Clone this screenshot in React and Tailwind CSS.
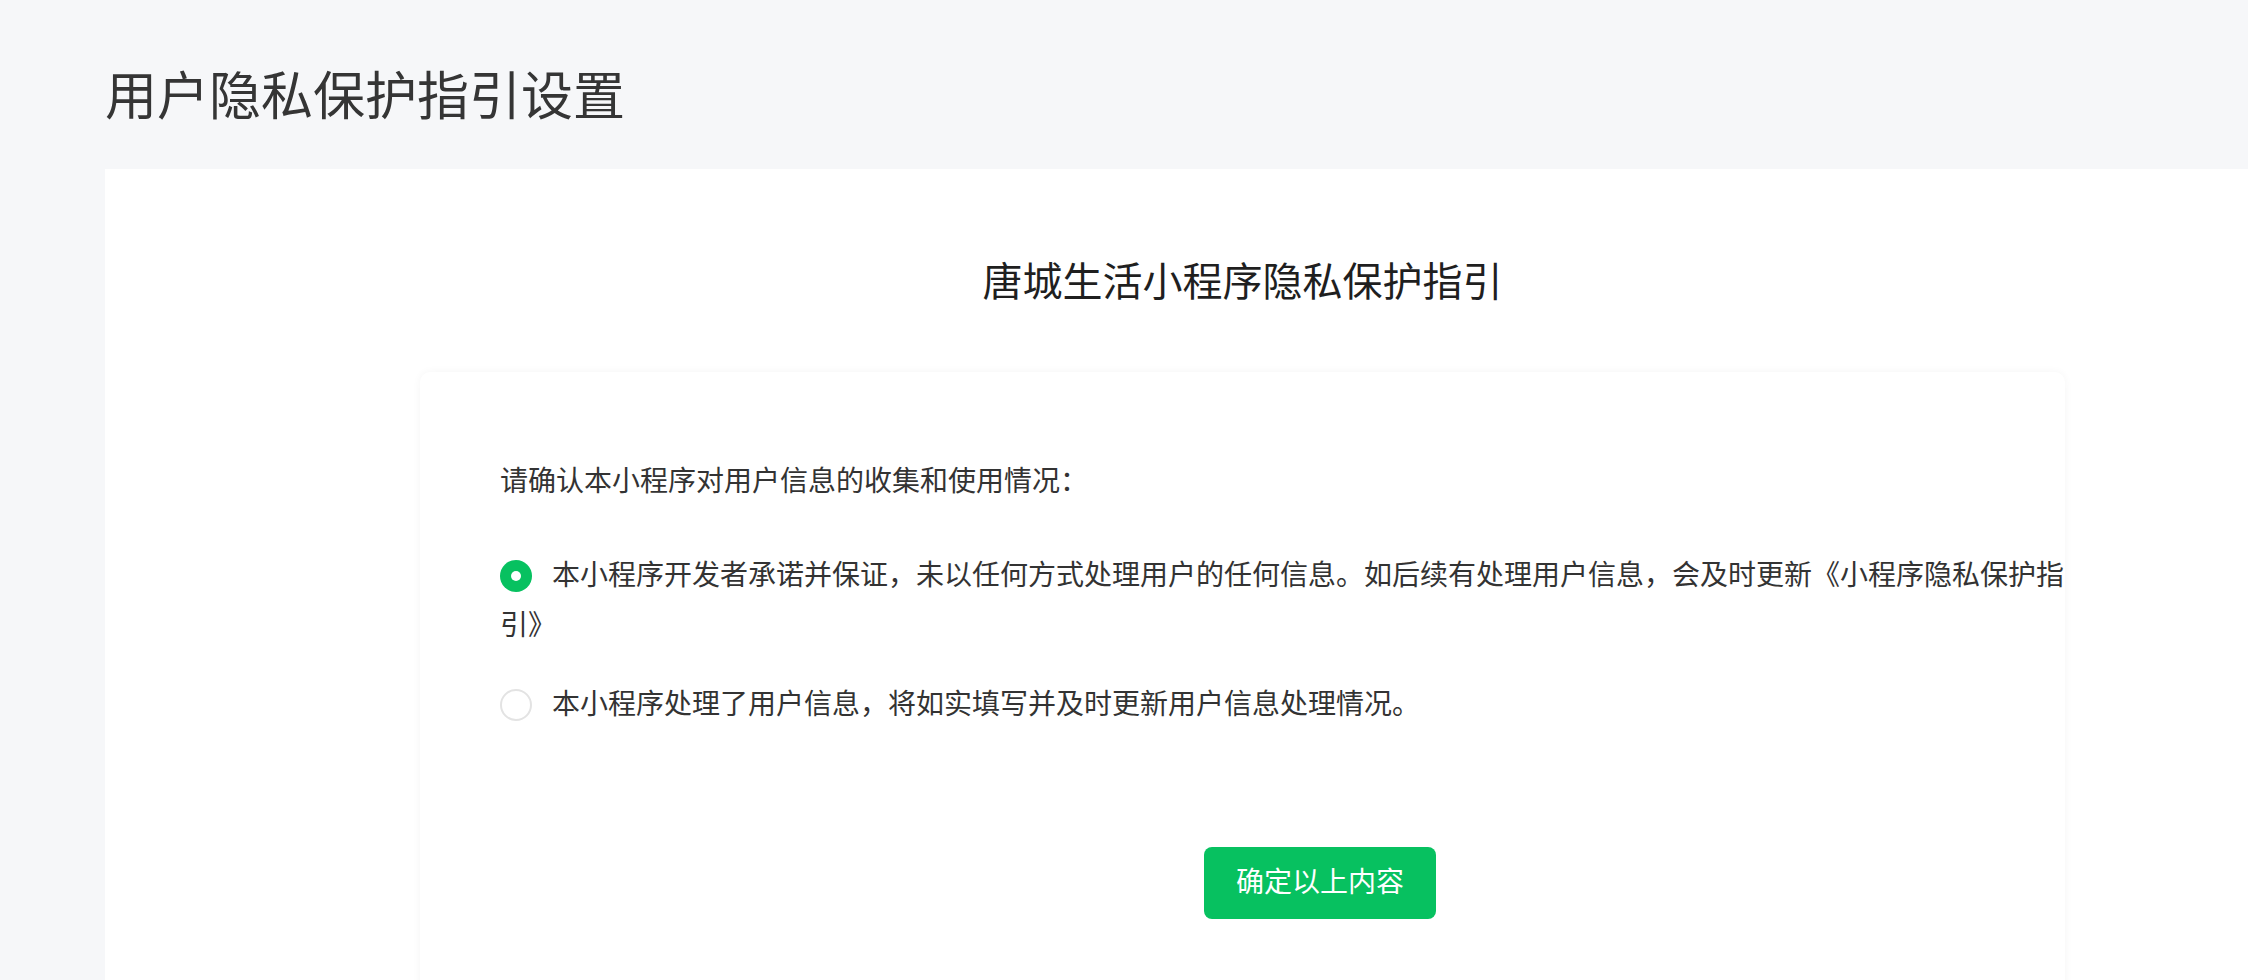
import React from 'react'

const OPTIONS = [
  {
    id: 'none',
    label:
      '本小程序开发者承诺并保证，未以任何方式处理用户的任何信息。如后续有处理用户信息，会及时更新《小程序隐私保护指引》',
  },
  {
    id: 'some',
    label: '本小程序处理了用户信息，将如实填写并及时更新用户信息处理情况。',
  },
]

function Radio({ checked }) {
  return (
    <span
      className={`float-left mt-[9px] mr-[20px] flex h-[32px] w-[32px] items-center justify-center rounded-full ${
        checked ? 'bg-[#07c160]' : 'border-2 border-[#e3e3e3] bg-white'
      }`}
    >
      {checked && <span className="block h-[10px] w-[10px] rounded-full bg-white" />}
    </span>
  )
}

export default function App() {
  const [choice, setChoice] = React.useState('none')

  return (
    <div className="flex h-[980px] flex-col overflow-hidden bg-[#f6f7f9] font-['Liberation_Sans','Noto_Sans_CJK_SC',sans-serif]">
      <h1 className="pl-[105px] pt-[71px] text-[52px] leading-[52px] font-normal text-[#353535]">
        用户隐私保护指引设置
      </h1>

      <div className="mt-[46px] ml-[105px] flex-1 bg-white">
        <div className="ml-[315px] w-[1645px]">
          <h2 className="pt-[85px] text-center text-[40px] leading-[56px] font-normal text-[#1f1f1f]">
            唐城生活小程序隐私保护指引
          </h2>

          <div className="mt-[62px] h-[700px] rounded-[10px] bg-white pl-[80px] pt-[85px] shadow-[0_0_8px_rgba(0,0,0,0.045)]">
            <div className="w-[1580px] text-[28px] leading-[50px] text-[#333]">
              <p>请确认本小程序对用户信息的收集和使用情况：</p>

              <div className="mt-[44px] flex flex-col gap-[29px]">
                {OPTIONS.map((opt) => (
                  <label key={opt.id} className="block cursor-pointer" onClick={() => setChoice(opt.id)}>
                    <Radio checked={choice === opt.id} />
                    {opt.label}
                  </label>
                ))}
              </div>

              <button
                type="button"
                className="mt-[117px] ml-[704px] flex h-[72px] w-[232px] items-center justify-center rounded-[8px] bg-[#07c160] text-[28px] text-white"
              >
                确定以上内容
              </button>
            </div>
          </div>
        </div>
      </div>
    </div>
  )
}
